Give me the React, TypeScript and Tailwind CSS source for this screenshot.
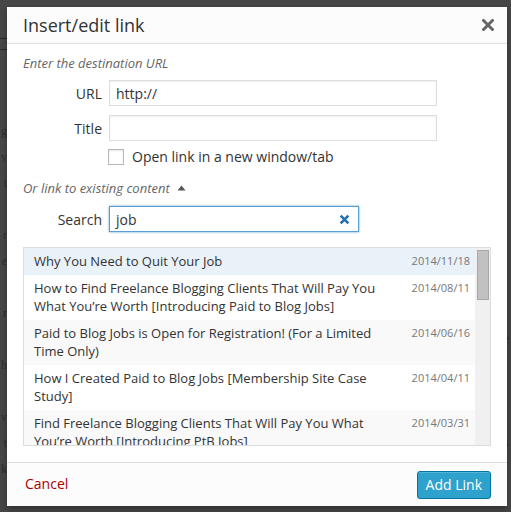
import React from 'react';

type Post = { title: string; date: string };

const posts: Post[] = [
  { title: 'Why You Need to Quit Your Job', date: '2014/11/18' },
  { title: 'How to Find Freelance Blogging Clients That Will Pay You What You’re Worth [Introducing Paid to Blog Jobs]', date: '2014/08/11' },
  { title: 'Paid to Blog Jobs is Open for Registration! (For a Limited Time Only)', date: '2014/06/16' },
  { title: 'How I Created Paid to Blog Jobs [Membership Site Case Study]', date: '2014/04/11' },
  { title: 'Find Freelance Blogging Clients That Will Pay You What You’re Worth [Introducing PtB Jobs]', date: '2014/03/31' },
];

// bits of the editor page that peek out beside the modal
const leftEdge = ['g', 'v', 't', '', 'r', 'e', '', 'r', '', 'h', '', 'v', 't', 'k'];
const rightEdge = ['', '', '', '', '', '', '', '', 'e', '', '', 't', 's', ''];

function EdgeStrip({ chars, side }: { chars: string[]; side: 'left' | 'right' }) {
  return (
    <div
      className={`w-[7px] shrink-0 overflow-hidden pt-[118px] font-['Liberation_Serif',serif] text-[12px] leading-[26px] text-[#2c2c2c] ${
        side === 'left' ? 'text-right' : 'text-left'
      }`}
    >
      {side === 'left' && (
        <div className="h-[12px] -mt-[80px] mb-[68px] border-y border-[#2a2a2a]" />
      )}
      {chars.map((c, i) => (
        <div key={i} className="h-[26px]">{c}</div>
      ))}
    </div>
  );
}

function ClearIcon() {
  return (
    <svg width="11" height="11" viewBox="0 0 10 10">
      <path d="M1.5 1.5 L8.5 8.5 M8.5 1.5 L1.5 8.5" stroke="#2271b1" strokeWidth="2.4" strokeLinecap="butt" />
    </svg>
  );
}

function CloseIcon() {
  return (
    <svg width="12" height="12" viewBox="0 0 12 12">
      <path d="M1.5 1.5 L10.5 10.5 M10.5 1.5 L1.5 10.5" stroke="#666" strokeWidth="3" strokeLinecap="square" />
    </svg>
  );
}

function FieldRow({ label, children }: { label: string; children: React.ReactNode }) {
  return (
    <div className="flex items-center">
      <span className="w-[86px] pr-[7px] text-right text-[14px] text-[#333]">{label}</span>
      {children}
    </div>
  );
}

export default function App() {
  return (
    <div className="relative w-[511px] h-[512px] overflow-hidden bg-[#464646] font-['Open_Sans',sans-serif] flex justify-between">
      <EdgeStrip chars={leftEdge} side="left" />
      <EdgeStrip chars={rightEdge} side="right" />

      <div className="absolute left-[7px] top-[7px] w-[500px] h-[499px] bg-white flex flex-col shadow-[0_3px_6px_rgba(0,0,0,0.3)]">
        <div className="h-[37px] shrink-0 flex items-center justify-between pl-[16px] pr-[13px] bg-[#fcfcfc] border-b border-[#dddddd]">
          <h1 className="text-[18px] text-[#333] leading-[36px]">Insert/edit link</h1>
          <button className="w-[12px] h-[12px] flex items-center justify-center">
            <CloseIcon />
          </button>
        </div>

        <div className="flex-1 px-[16px] pt-[10px] flex flex-col">
          <p className="italic text-[13px] text-[#666] leading-[18px]">Enter the destination URL</p>

          <div className="mt-[8px] flex flex-col gap-[9px]">
            <FieldRow label="URL">
              <div className="w-[328px] h-[26px] border border-[#dddddd] bg-white shadow-[inset_0_1px_2px_rgba(0,0,0,0.07)] px-[6px] flex items-center text-[14px] text-[#333]">
                http://
              </div>
            </FieldRow>
            <FieldRow label="Title">
              <div className="w-[328px] h-[26px] border border-[#dddddd] bg-white shadow-[inset_0_1px_2px_rgba(0,0,0,0.07)]" />
            </FieldRow>
          </div>

          <label className="mt-[5px] ml-[85px] flex items-center gap-[8px] text-[14px] text-[#333]">
            <span className="w-[16px] h-[16px] border border-[#b4b9be] bg-white shadow-[inset_0_1px_2px_rgba(0,0,0,0.1)]" />
            Open link in a new window/tab
          </label>

          <p className="mt-[12px] flex items-center gap-[7px] italic text-[13px] text-[#666] leading-[18px]">
            Or link to existing content
            <svg width="9" height="6" viewBox="0 0 9 6">
              <path d="M0.5 5.5 L4.5 0.5 L8.5 5.5 Z" fill="#555" />
            </svg>
          </p>

          <div className="mt-[9px]">
            <FieldRow label="Search">
              <div className="w-[250px] h-[26px] border border-[#5b9dd9] bg-white shadow-[0_0_2px_rgba(30,140,190,0.8)] pl-[6px] pr-[8px] flex items-center justify-between text-[14px] text-[#333]">
                job
                <ClearIcon />
              </div>
            </FieldRow>
          </div>

          <div className="mt-[15px] h-[199px] border border-[#dddddd] bg-white flex overflow-hidden">
            <ul className="flex-1 overflow-hidden">
              {posts.map((post, i) => (
                <li
                  key={post.date}
                  className={`flex justify-between pl-[10px] pr-[5px] pt-[4px] pb-[5px] text-[13px] leading-[18px] ${
                    i === 0 ? 'bg-[#e9f1f9]' : i % 2 === 0 ? 'bg-[#f9f9f9]' : 'bg-white'
                  }`}
                >
                  <span className="w-[362px] text-[#333]">{post.title}</span>
                  <span className="text-[11px] text-[#777] leading-[18px]">{post.date}</span>
                </li>
              ))}
            </ul>
            <div className="w-[15px] shrink-0 bg-[#f0f0f0] pl-[2px] pr-[1px] pt-[2px]">
              <div className="h-[50px] bg-[#c1c1c1] border border-[#a8a8a8]" />
            </div>
          </div>
        </div>

        <div className="h-[44px] shrink-0 flex items-center justify-between pl-[18px] pr-[16px] bg-[#fcfcfc] border-t border-[#dddddd]">
          <a className="text-[14px] text-[#aa0000] -mt-[2px]">Cancel</a>
          <button className="h-[28px] px-[8px] rounded-[3px] bg-[#2ea2cc] border border-[#0074a2] shadow-[inset_0_1px_0_rgba(120,200,230,0.5)] text-[14px] text-white">
            Add Link
          </button>
        </div>
      </div>
    </div>
  );
}
